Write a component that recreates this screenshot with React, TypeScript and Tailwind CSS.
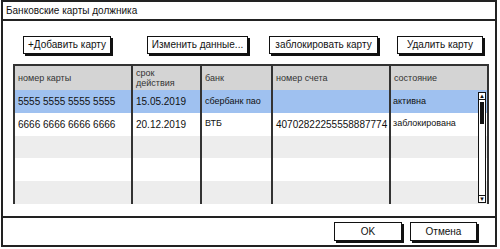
const rows = [
  { card: '5555 5555 5555 5555', date: '15.05.2019', bank: 'сбербанк пао', account: '', state: 'активна' },
  { card: '6666 6666 6666 6666', date: '20.12.2019', bank: 'ВТБ', account: '40702822255558887774', state: 'заблокирована' },
  { card: '', date: '', bank: '', account: '', state: '' },
  { card: '', date: '', bank: '', account: '', state: '' },
  { card: '', date: '', bank: '', account: '', state: '' },
];

const rowBg = ['bg-[#9fc1f0]', 'bg-white', 'bg-[#ededed]', 'bg-white', 'bg-[#ededed]'];

function SketchButton({ label, className }: { label: string; className: string }) {
  return (
    <button
      className={`h-[18px] border-[1.5px] border-[#111] bg-white text-[10px] leading-none text-[#111] shadow-[2px_2px_0_#111] ${className}`}
    >
      {label}
    </button>
  );
}

export default function App() {
  const cell = 'border-r-2 border-[#333] px-[3px] flex items-center overflow-hidden whitespace-nowrap';
  return (
    <div className="h-[249px] w-[500px] bg-white font-['Liberation_Sans',sans-serif] text-[#111]">
      <div className="ml-[1px] flex h-[247px] w-[496px] flex-col border-2 border-[#222]">
        <div className="flex h-[19px] items-center border-b-2 border-[#222] pl-[3px] text-[10px]">
          Банковские карты должника
        </div>

        <div className="flex flex-1 flex-col px-[10px]">
          <div className="mt-[15px] flex h-[18px] items-center">
            <SketchButton label="+Добавить карту" className="ml-[10px] w-[88px]" />
            <SketchButton label="Изменить данные..." className="ml-[36px] w-[101px]" />
            <SketchButton label="заблокировать карту" className="ml-[21px] w-[109px]" />
            <SketchButton label="Удалить карту" className="ml-[19px] w-[86px]" />
          </div>

          <div className="mt-[10px] h-[140px] w-[476px] border-2 border-[#333]">
            <div className="grid h-[24px] grid-cols-[118px_69px_71px_118px_1fr] bg-[#d4d4d4] text-[9px] leading-[10px] text-[#333]">
              <div className={cell}>номер карты</div>
              <div className={cell}>срок<br />действия</div>
              <div className={cell}>банк</div>
              <div className={cell}>номер счета</div>
              <div className="flex items-center px-[3px]">состояние</div>
            </div>
            <div className="relative">
              {rows.map((r, i) => (
                <div
                  key={i}
                  className={`grid h-[22.8px] grid-cols-[118px_69px_71px_118px_1fr] text-[10px] ${rowBg[i]}`}
                >
                  <div className={cell}>{r.card}</div>
                  <div className={cell}>{r.date}</div>
                  <div className={`${cell} text-[9px]`}>{r.bank}</div>
                  <div className={cell}>{r.account}</div>
                  <div className="flex items-center px-[2px] text-[9px]">{r.state}</div>
                </div>
              ))}
              <div className="absolute right-[1px] top-[2px] bottom-[1px] flex w-[8px] flex-col border-[1.5px] border-[#111] bg-white">
                <div className="flex h-[7px] items-center justify-center border-b border-[#111] text-[6px] leading-none">▲</div>
                <div className="mx-auto mt-[2px] h-[22px] w-[4px] bg-[#111]" />
                <div className="flex-1" />
                <div className="flex h-[7px] items-center justify-center border-t border-[#111] text-[6px] leading-none">▼</div>
              </div>
            </div>
          </div>
        </div>

        <div className="flex h-[29px] items-center justify-end border-t-2 border-[#222] pr-[18px]">
          <SketchButton label="OK" className="h-[19px] w-[68px]" />
          <SketchButton label="Отмена" className="ml-[8px] h-[19px] w-[67px]" />
        </div>
      </div>
    </div>
  );
}
